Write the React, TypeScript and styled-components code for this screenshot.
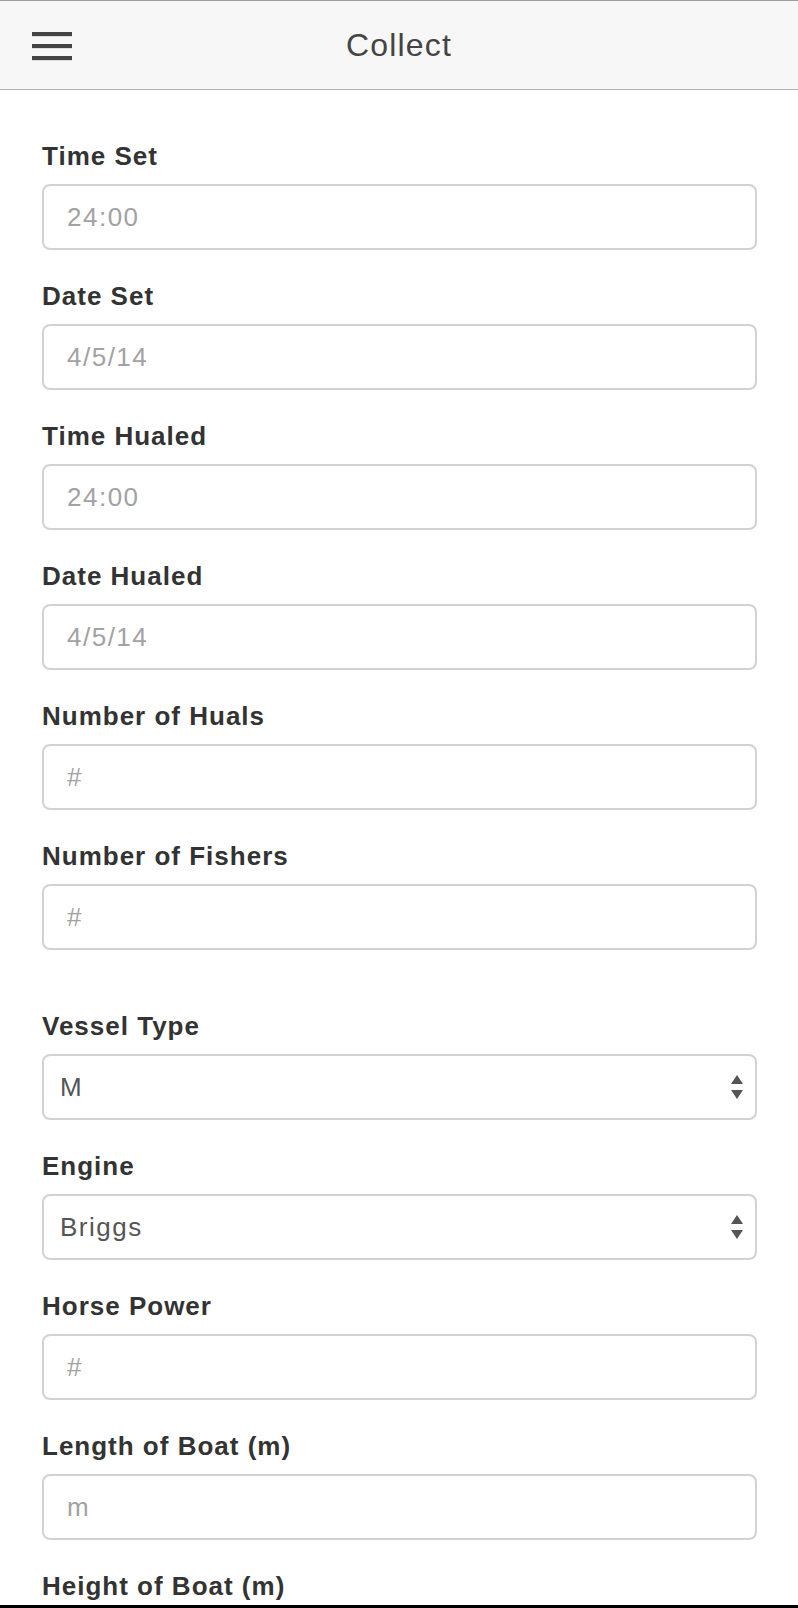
import React from "react";
import styled, { createGlobalStyle } from "styled-components";

const GlobalStyle = createGlobalStyle`
  html, body {
    margin: 0;
    padding: 0;
    background: #ffffff;
    font-family: "Liberation Sans", Arial, Helvetica, sans-serif;
  }
  * { box-sizing: border-box; }
`;

const Page = styled.div`
  width: 100%;
  min-height: 100vh;
  background: #fff;
`;

const Header = styled.header`
  height: 90px;
  background: #f7f7f7;
  border-top: 1px solid #9c9c9c;
  border-bottom: 1px solid #b2b2b2;
  display: grid;
  grid-template-columns: 1fr auto 1fr;
  align-items: center;
`;

const MenuButton = styled.button`
  justify-self: start;
  margin-left: 32px;
  margin-top: 2px;
  padding: 0;
  border: 0;
  background: transparent;
  display: flex;
  flex-direction: column;
  gap: 8px;
  cursor: pointer;
`;

const Bar = styled.span`
  display: block;
  width: 40px;
  height: 4px;
  background: #444;
  box-shadow: 0 1px 0 #dcdcdc;
`;

const Title = styled.h1`
  margin: 0;
  font-size: 32px;
  line-height: 36px;
  font-weight: 400;
  letter-spacing: 1.2px;
  color: #444;
`;

const Content = styled.main`
  padding: 51px 41px 0 42px;
  display: flex;
  flex-direction: column;
  gap: 30px;
`;

const Section = styled.section`
  display: flex;
  flex-direction: column;
`;

const Group = styled.div`
  display: flex;
  flex-direction: column;
  margin-bottom: 31px;
`;

const Label = styled.label`
  display: block;
  font-size: 26px;
  line-height: 30px;
  font-weight: 700;
  letter-spacing: 1px;
  color: #333;
  margin-bottom: 13px;
`;

const TextInput = styled.input`
  width: 100%;
  height: 66px;
  border: 2px solid #d2d2d2;
  border-radius: 8px;
  background: #fff;
  padding: 0 0 0 23px;
  font-family: inherit;
  font-size: 26px;
  letter-spacing: 1.5px;
  color: #555;
  outline: none;
  &::placeholder {
    color: #a2a2a2;
    opacity: 1;
  }
`;

const SelectWrap = styled.div`
  position: relative;
  width: 100%;
`;

const Select = styled.select`
  width: 100%;
  height: 66px;
  border: 2px solid #d2d2d2;
  border-radius: 8px;
  background: #fff;
  padding: 0 0 0 16px;
  font-family: inherit;
  font-size: 26px;
  letter-spacing: 1.5px;
  color: #555;
  appearance: none;
  -webkit-appearance: none;
  outline: none;
`;

const Arrows = styled.svg`
  position: absolute;
  right: 14px;
  top: 50%;
  transform: translateY(-50%);
  width: 12px;
  height: 24px;
  pointer-events: none;
`;

const BottomEdge = styled.div`
  position: fixed;
  left: 0;
  right: 0;
  bottom: 0;
  height: 3px;
  background: #000;
`;

type Field = { label: string; placeholder?: string; options?: string[] };

const timeFields: Field[] = [
  { label: "Time Set", placeholder: "24:00" },
  { label: "Date Set", placeholder: "4/5/14" },
  { label: "Time Hualed", placeholder: "24:00" },
  { label: "Date Hualed", placeholder: "4/5/14" },
  { label: "Number of Huals", placeholder: "#" },
  { label: "Number of Fishers", placeholder: "#" },
];

const vesselFields: Field[] = [
  { label: "Vessel Type", options: ["M", "P", "S"] },
  { label: "Engine", options: ["Briggs", "Yamaha", "Honda"] },
  { label: "Horse Power", placeholder: "#" },
  { label: "Length of Boat (m)", placeholder: "m" },
  { label: "Height of Boat (m)", placeholder: "m" },
];

const SelectArrows = () => (
  <Arrows viewBox="0 0 12 24">
    <polygon points="6,0 12,9 0,9" fill="#555" />
    <polygon points="0,15 12,15 6,24" fill="#555" />
  </Arrows>
);

const FieldRow: React.FC<{ field: Field; id: string }> = ({ field, id }) => (
  <Group>
    <Label htmlFor={id}>{field.label}</Label>
    {field.options ? (
      <SelectWrap>
        <Select id={id} defaultValue={field.options[0]}>
          {field.options.map((o) => (
            <option key={o} value={o}>
              {o}
            </option>
          ))}
        </Select>
        <SelectArrows />
      </SelectWrap>
    ) : (
      <TextInput id={id} type="text" placeholder={field.placeholder} />
    )}
  </Group>
);

export default function App() {
  return (
    <Page>
      <GlobalStyle />
      <Header>
        <MenuButton aria-label="Menu">
          <Bar />
          <Bar />
          <Bar />
        </MenuButton>
        <Title>Collect</Title>
        <span />
      </Header>
      <Content>
        <Section>
          {timeFields.map((f, i) => (
            <FieldRow key={f.label} field={f} id={`t${i}`} />
          ))}
        </Section>
        <Section>
          {vesselFields.map((f, i) => (
            <FieldRow key={f.label} field={f} id={`v${i}`} />
          ))}
        </Section>
      </Content>
      <BottomEdge />
    </Page>
  );
}
